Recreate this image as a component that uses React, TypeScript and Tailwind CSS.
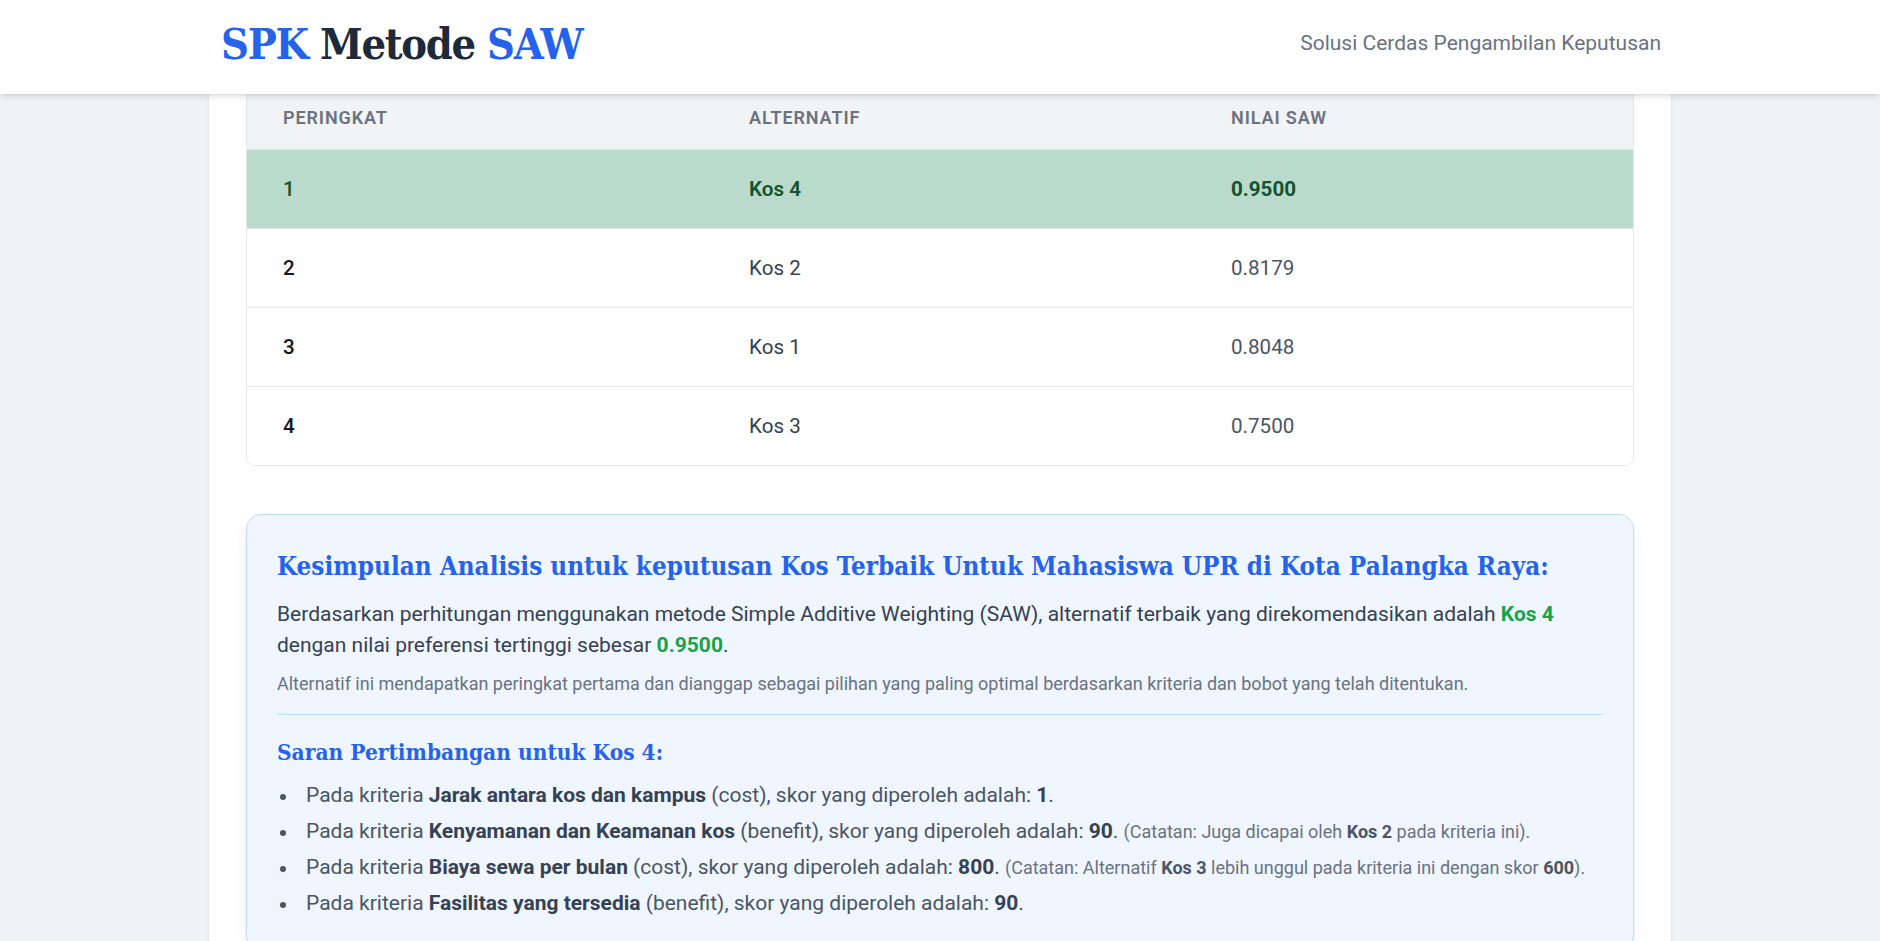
import React from 'react';

interface RankRow {
  rank: number;
  name: string;
  score: string;
}

const rows: RankRow[] = [
  { rank: 1, name: 'Kos 4', score: '0.9500' },
  { rank: 2, name: 'Kos 2', score: '0.8179' },
  { rank: 3, name: 'Kos 1', score: '0.8048' },
  { rank: 4, name: 'Kos 3', score: '0.7500' },
];

const slab = "font-['DejaVu_Serif_Condensed','DejaVu_Serif',serif]";

const Bullet: React.FC<{ children: React.ReactNode }> = ({ children }) => (
  <li className="flex items-start">
    <span className="w-[29px] shrink-0 flex items-center h-[31px]">
      <span className="ml-[3px] w-[6px] h-[6px] rounded-full bg-gray-600 mt-[3px]" />
    </span>
    <span>{children}</span>
  </li>
);

const App: React.FC = () => {
  return (
    <div className="min-h-screen bg-[#f1f2f5] font-['Roboto',sans-serif] overflow-hidden">
      <header className="relative z-10 h-[94px] bg-white shadow-md">
        <div className="w-[1438px] h-full mx-auto flex items-center justify-between pb-[6px]">
          <h1 className={`${slab} font-stretch-condensed text-[43px] tracking-[-1.3px] font-bold leading-none text-gray-800`}>
            <span className="text-[#2563eb]">SPK</span> Metode <span className="text-[#2563eb]">SAW</span>
          </h1>
          <p className="text-[21px] text-gray-500 mr-[-2px]">Solusi Cerdas Pengambilan Keputusan</p>
        </div>
      </header>

      <main className="w-[1462px] mx-auto -mt-[8px] bg-white shadow-sm px-[37px] pb-[40px] h-[900px]">
        <div className="border border-gray-200 rounded-[9px] overflow-hidden">
          <table className="w-full border-collapse">
            <thead className="bg-[#f2f3f5] border-b border-gray-200">
              <tr>
                <th className="w-[465px] text-left pl-[36px] py-[21px] text-[18px] leading-[20px] font-semibold text-gray-500 uppercase tracking-wider">
                  Peringkat
                </th>
                <th className="w-[482px] text-left pl-[37px] py-[21px] text-[18px] leading-[20px] font-semibold text-gray-500 uppercase tracking-wider">
                  Alternatif
                </th>
                <th className="text-left pl-[37px] py-[21px] text-[18px] leading-[20px] font-semibold text-gray-500 uppercase tracking-wider">
                  Nilai SAW
                </th>
              </tr>
            </thead>
            <tbody>
              {rows.map((row) => {
                const top = row.rank === 1;
                return (
                  <tr
                    key={row.rank}
                    className={`${top ? 'bg-[#badacb]' : 'bg-white'} border-b border-gray-200 last:border-b-0`}
                  >
                    <td className={`pl-[36px] py-[25px] text-[20.6px] leading-[28px] font-medium ${top ? 'text-[#14532d]' : 'text-gray-900'}`}>
                      {row.rank}
                    </td>
                    <td className={`pl-[37px] py-[25px] text-[20.6px] leading-[28px] ${top ? 'text-[#14532d] font-semibold' : 'text-gray-700'}`}>
                      {row.name}
                    </td>
                    <td className={`pl-[37px] py-[25px] text-[20.6px] leading-[28px] ${top ? 'text-[#14532d] font-bold' : 'text-gray-600'}`}>
                      {row.score}
                    </td>
                  </tr>
                );
              })}
            </tbody>
          </table>
        </div>

        <section className="mt-[48px] bg-[#eff6ff] border border-[#bfdbfe] rounded-[15px] shadow-lg p-[30px]">
          <h2 className={`${slab} font-stretch-condensed text-[25.8px] leading-[42px] font-bold text-[#2563eb]`}>
            Kesimpulan Analisis untuk keputusan Kos Terbaik Untuk Mahasiswa UPR di Kota Palangka Raya:
          </h2>
          <p className="mt-[12px] text-[21px] leading-[31px] text-gray-700">
            Berdasarkan perhitungan menggunakan metode Simple Additive Weighting (SAW), alternatif terbaik yang direkomendasikan adalah{' '}
            <span className="font-bold text-[#16a34a]">Kos 4</span> dengan nilai preferensi tertinggi sebesar{' '}
            <span className="font-bold text-[#16a34a]">0.9500</span>.
          </p>
          <p className="mt-[10px] text-[18px] leading-[26px] text-gray-500">
            Alternatif ini mendapatkan peringkat pertama dan dianggap sebagai pilihan yang paling optimal berdasarkan kriteria dan bobot yang telah ditentukan.
          </p>
          <div className="mt-[17px] border-t border-[#bfdbfe]" />
          <h3 className={`${slab} font-stretch-condensed mt-[22px] text-[22.5px] leading-[30px] font-bold text-[#2563eb]`}>
            Saran Pertimbangan untuk Kos 4:
          </h3>
          <ul className="mt-[13px] flex flex-col gap-[5px] text-[21px] leading-[31px] text-gray-600">
            <Bullet>
              Pada kriteria <b className="font-bold text-gray-700">Jarak antara kos dan kampus</b> (cost), skor yang diperoleh adalah: <b className="font-bold text-gray-700">1</b>.
            </Bullet>
            <Bullet>
              Pada kriteria <b className="font-bold text-gray-700">Kenyamanan dan Keamanan kos</b> (benefit), skor yang diperoleh adalah: <b className="font-bold text-gray-700">90</b>.{' '}
              <span className="text-[18px] text-gray-500">
                (Catatan: Juga dicapai oleh <b className="font-bold text-gray-600">Kos 2</b> pada kriteria ini).
              </span>
            </Bullet>
            <Bullet>
              Pada kriteria <b className="font-bold text-gray-700">Biaya sewa per bulan</b> (cost), skor yang diperoleh adalah: <b className="font-bold text-gray-700">800</b>.{' '}
              <span className="text-[18px] text-gray-500">
                (Catatan: Alternatif <b className="font-bold text-gray-600">Kos 3</b> lebih unggul pada kriteria ini dengan skor <b className="font-bold text-gray-600">600</b>).
              </span>
            </Bullet>
            <Bullet>
              Pada kriteria <b className="font-bold text-gray-700">Fasilitas yang tersedia</b> (benefit), skor yang diperoleh adalah: <b className="font-bold text-gray-700">90</b>.
            </Bullet>
          </ul>
        </section>
      </main>
    </div>
  );
};

export default App;
